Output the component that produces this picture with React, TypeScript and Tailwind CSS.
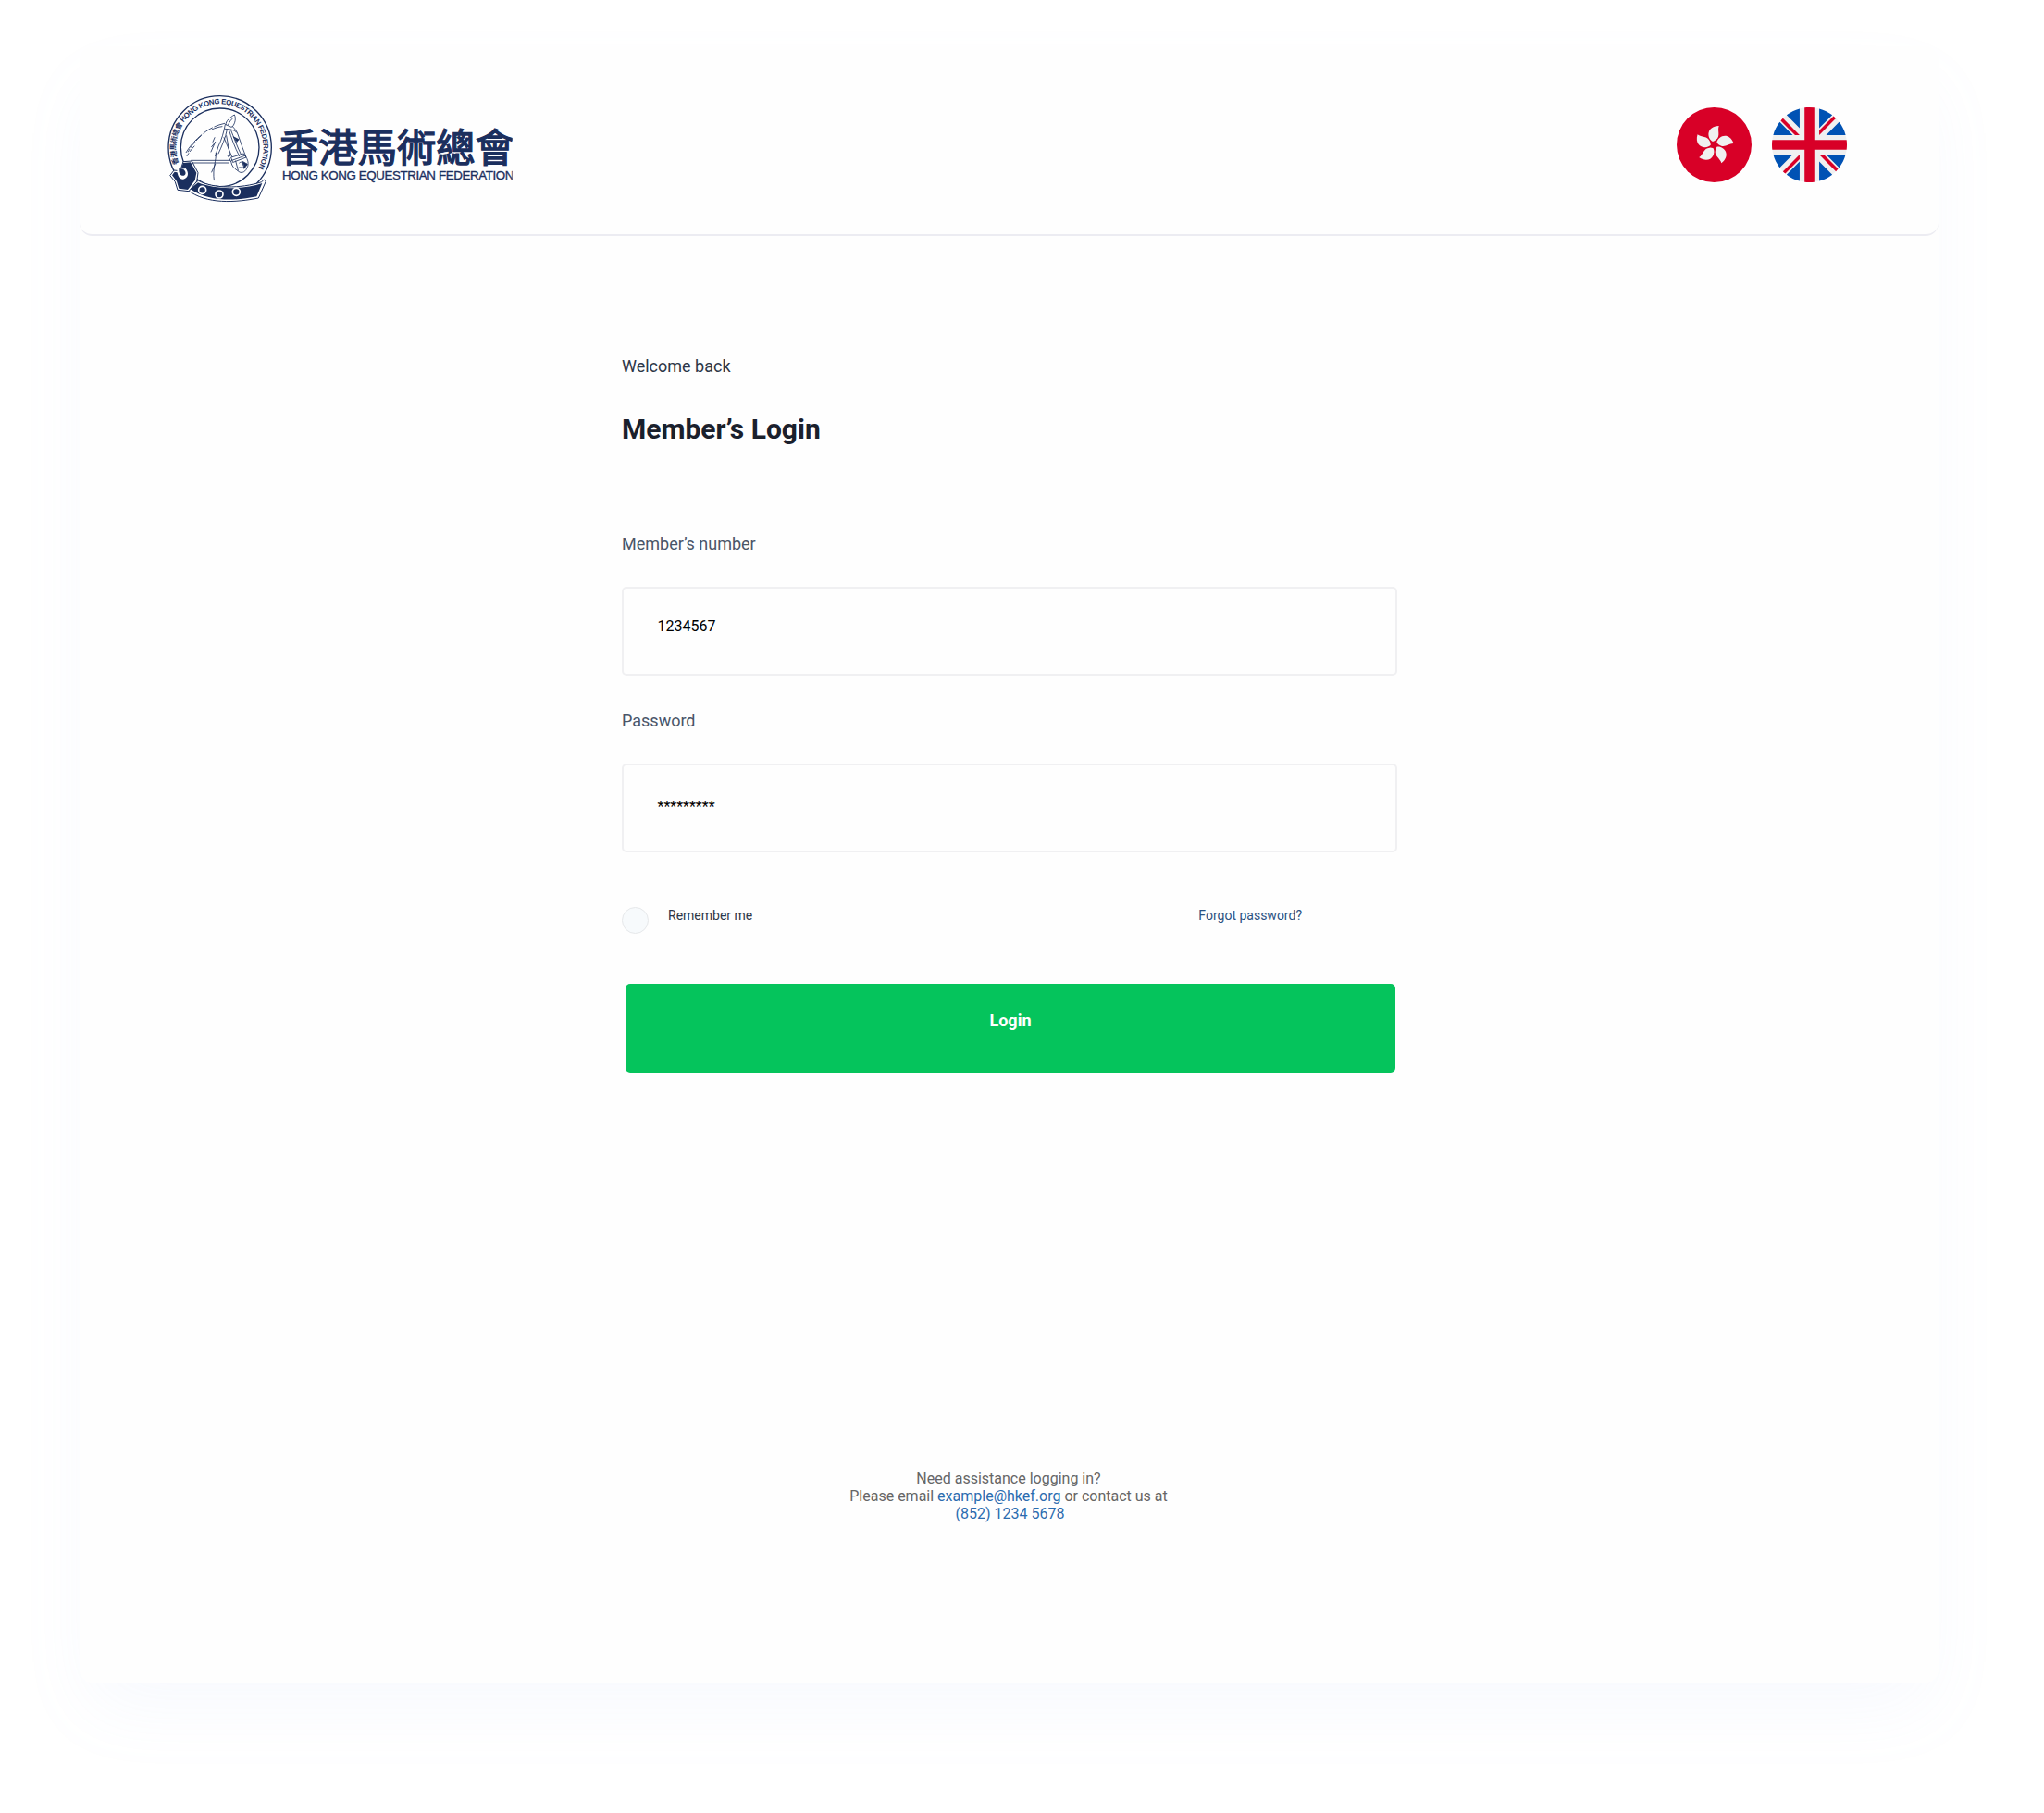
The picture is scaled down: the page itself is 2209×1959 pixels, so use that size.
import React from "react";

const NAVY = "#1b2f5e";

function Seal() {
  return (
    <g fill="none" stroke={NAVY} strokeLinecap="round" strokeLinejoin="round">
      <circle cx="203" cy="208" r="167" strokeWidth="4" />
      <circle cx="203" cy="208" r="127" strokeWidth="4" />
      <defs>
        <path id="ringText" d="M69.500 260.500 A142 142 0 1 1 323 283" />
      </defs>
      <text fill={NAVY} stroke="none" fontSize="23" fontWeight="700" fontFamily="'Noto Sans CJK TC', sans-serif">
        <textPath href="#ringText" startOffset="0" textLength="134">香港馬術總會</textPath>
      </text>
      <text fill={NAVY} stroke="none" fontSize="23.500" fontWeight="700" fontFamily="'Liberation Sans', Arial, sans-serif">
        <textPath href="#ringText" startOffset="139" textLength="428">HONG KONG EQUESTRIAN FEDERATION</textPath>
      </text>
      {/* horse head and bridle */}
      <g strokeWidth="2.500">
        <path d="M222 134 C222 122 234 112 250 102 C256 114 252 130 244 140 C252 148 258 156 262 168 L276 208 L288 240 C296 252 296 266 290 276 C284 290 270 292 264 286 C256 280 246 274 242 264 C240 254 234 244 228 234" />
        <path d="M230 134 C234 124 240 118 246 112 M222 134 L240 142 L244 140 M220 148 C236 150 250 150 258 160" />
        <path d="M218 130 C190 136 168 148 150 162 C126 180 104 204 90 230 M210 140 C196 142 184 146 172 152" strokeDasharray="34 8" />
        <path d="M142 170 C126 184 108 206 100 222 M120 204 C110 214 102 226 96 236" strokeDasharray="22 7" />
        <path d="M220 134 C216 158 208 184 198 204 L188 236 M226 150 C222 176 208 206 198 228 M224 170 L236 236 M216 176 L242 238" />
        <path d="M188 190 L174 222 M184 196 L176 206 M180 190 L186 176" />
        <path d="M190 226 C192 250 178 276 184 314 M188 262 L176 288" />
        <path d="M232 150 C240 176 250 206 266 236 M238 150 C248 176 260 208 272 232 M240 240 L280 228 L288 240 L246 256 Z M242 250 L286 234" />
        <path d="M266 258 C272 252 280 256 278 264 M262 274 C270 270 276 276 284 272 M254 252 L262 282" />
        <path d="M248 174 L264 182 L258 190 Z" fill={NAVY} />
        <path d="M278 254 L292 262 L282 276 Z" fill={NAVY} />
      </g>
      <path d="M110 250 H236 M110 258 H232" strokeWidth="2.500" />
      {/* horseshoe */}
      <path d="M134 316 C180 342 270 342 338 320 L346 312 L352 318 L328 372 C256 386 160 394 98 346 Z" fill="#fff" strokeWidth="3" />
      <path d="M132 322 C190 346 280 344 340 324 L322 367 C250 382 168 384 106 343 Z" fill={NAVY} stroke="none" />
      <path d="M42 298 L54 282 L74 284 L84 254 L112 252 L132 290 L128 318 L102 350 L66 346 L58 320 Z" fill="#fff" strokeWidth="3" />
      <path d="M48 298 L56 287 L72 290 L84 258 L108 256 L127 290 L122 314 L99 345 L70 341 L63 318 Z" fill={NAVY} stroke="none" />
      <path d="M64 280 L92 276 C104 290 100 308 84 311 C72 312 65 302 64 280 Z" fill="#fff" stroke="none" />
      <path d="M70 276 L86 280 C94 288 93 297 86 299 C77 301 71 293 70 284 Z" fill={NAVY} stroke="none" />
      <g stroke="#fff" strokeWidth="5">
        <circle cx="146" cy="346" r="12" />
        <circle cx="201" cy="360" r="12" />
        <circle cx="256" cy="352" r="12" />
      </g>
    </g>
  );
}

function Logo() {
  return (
    <svg className="block h-[140px] w-[400px]" viewBox="0 0 1200 420">
      <defs>
        <clipPath id="wordmark"><rect x="0" y="0" width="1151" height="420" /></clipPath>
      </defs>
      <Seal />
      <g clipPath="url(#wordmark)" fill={NAVY}>
        <text x="396" y="255" fontSize="127" fontWeight="400" stroke={NAVY} strokeWidth="4" textLength="762" fontFamily="'Noto Sans CJK TC', sans-serif">香港馬術總會</text>
        <text x="405" y="312" fontSize="40" stroke={NAVY} strokeWidth="1" textLength="751" fontFamily="'Liberation Sans', Arial, sans-serif">HONG KONG EQUESTRIAN FEDERATION</text>
      </g>
    </svg>
  );
}

function HongKongFlag() {
  return (
    <svg className="block size-[81px]" viewBox="0 0 512 512">
      <circle cx="256" cy="256" r="256" fill="#d80027" />
      {[0, 72, 144, 216, 288].map((a) => (
        <path
          key={a}
          transform={`rotate(${a} 256 256)`}
          d="M247 234 C205 212 200 129 289 126 C276 158 303 195 269 222 C263 227 254 232 247 234 Z"
          fill="#f0f0f0"
        />
      ))}
    </svg>
  );
}

function BritishFlag() {
  return (
    <svg className="block size-[81px]" viewBox="0 0 512 512">
      <circle cx="256" cy="256" r="256" fill="#f0f0f0" />
      <g fill="#0052b4">
        <path d="M52.920 100.142c-20.109 26.163-35.272 56.318-44.101 89.077h133.178L52.920 100.142zM503.181 189.219c-8.829-32.758-23.993-62.913-44.101-89.076l-89.075 89.076h133.176zM8.819 322.784c8.830 32.758 23.993 62.913 44.101 89.075l89.074-89.075H8.819zM411.858 52.921c-26.163-20.109-56.317-35.272-89.076-44.102v133.177l89.076-89.075zM100.142 459.079c26.163 20.109 56.318 35.272 89.076 44.102V370.005l-89.076 89.074zM189.217 8.819c-32.758 8.830-62.913 23.993-89.075 44.101l89.075 89.075V8.819zM322.783 503.181c32.758-8.830 62.913-23.993 89.075-44.101l-89.075-89.075v133.176zM370.005 322.784l89.075 89.076c20.108-26.162 35.272-56.318 44.101-89.076H370.005z" />
      </g>
      <g fill="#d80027">
        <path d="M509.833 222.609H289.392V2.167A258.556 258.556 0 0 0 256 0c-11.319 0-22.461.744-33.391 2.167v220.441H2.167A258.556 258.556 0 0 0 0 256c0 11.319.744 22.461 2.167 33.391h220.441v220.442a258.350 258.350 0 0 0 66.783 0V289.392h220.442A258.533 258.533 0 0 0 512 256c0-11.317-.744-22.461-2.167-33.391z" />
        <path d="M322.783 322.784L437.019 437.020a256.636 256.636 0 0 0 15.048-16.435l-97.802-97.802h-31.482zM189.217 322.784h-.002L74.980 437.019a256.636 256.636 0 0 0 16.435 15.048l97.802-97.804v-31.479zM189.217 189.219v-.002L74.981 74.980a256.636 256.636 0 0 0-15.048 16.435l97.803 97.803h31.481zM322.783 189.219L437.020 74.981a256.328 256.328 0 0 0-16.435-15.047l-97.802 97.803v31.482z" />
      </g>
    </svg>
  );
}

function Field({ label, value, pad }: { label: string; value: string; pad: string }) {
  return (
    <div className="flex flex-col">
      <span className="h-[26px] text-[18px] leading-[26px] text-[#4a5568]">{label}</span>
      <div className={`mt-[33px] h-[96px] w-[838px] rounded-[5px] border-2 border-[#f0f0f2] bg-[#fefefe] pl-[36.500px] text-[16px] leading-[22px] text-black ${pad}`}>
        {value}
      </div>
    </div>
  );
}

export default function App() {
  return (
    <div className="h-[1959px] w-[2209px] overflow-hidden bg-white pt-[50px] pl-[86px] font-['Roboto',sans-serif]">
      <main className="flex h-[1768px] w-[2009px] flex-col rounded-[14px] bg-[#fefefe] shadow-[0_36px_80px_-12px_rgba(150,175,245,0.08)]">
        <header className="flex h-[205px] items-start justify-between rounded-[14px] border-b-[2px] border-[#ececf2] pt-[40px] pr-[99px] pl-[84px]">
          <Logo />
          <div className="mt-[26px] flex gap-[22px]">
            <HongKongFlag />
            <BritishFlag />
          </div>
        </header>
        <section className="ml-[586px] flex w-[838px] flex-col pt-[128px]">
          <p className="h-[26px] text-[18px] leading-[26px] text-[#2d3748]">Welcome back</p>
          <h1 className="mt-[35px] h-[40px] text-[30px] leading-[40px] font-bold text-[#1a202c]">Member’s Login</h1>
          <div className="mt-[91px] flex flex-col gap-[36px]">
            <Field label="Member’s number" value="1234567" pad="pt-[30px]" />
            <Field label="Password" value="*********" pad="pt-[34px]" />
          </div>
          <div className="mt-[59px] flex h-[30px] items-start">
            <span className="size-[29px] rounded-full border border-[#e6e8ea] bg-[#f7fafc]" />
            <span className="ml-[21px] text-[14px] leading-[18px] text-[#2d3748]">Remember me</span>
            <a className="mr-[103px] ml-auto text-[14px] leading-[18px] text-[#2c5282]">Forgot password?</a>
          </div>
          <button className="mt-[53px] ml-[4px] flex h-[96px] w-[832px] justify-center rounded-[5px] bg-[#05c45c] pt-[27px] text-[18px] leading-[26px] font-bold text-white">
            Login
          </button>
        </section>
        <footer className="mt-[429px] pr-px text-center text-[16px] leading-[19px] text-[#666666]">
          Need assistance logging in?
          <br />
          Please email <a className="text-[#2b6cb0]">example@hkef.org</a> or contact us at
          <br />
          <a className="pl-[3px] text-[#2b6cb0]">(852) 1234 5678</a>
        </footer>
      </main>
    </div>
  );
}
